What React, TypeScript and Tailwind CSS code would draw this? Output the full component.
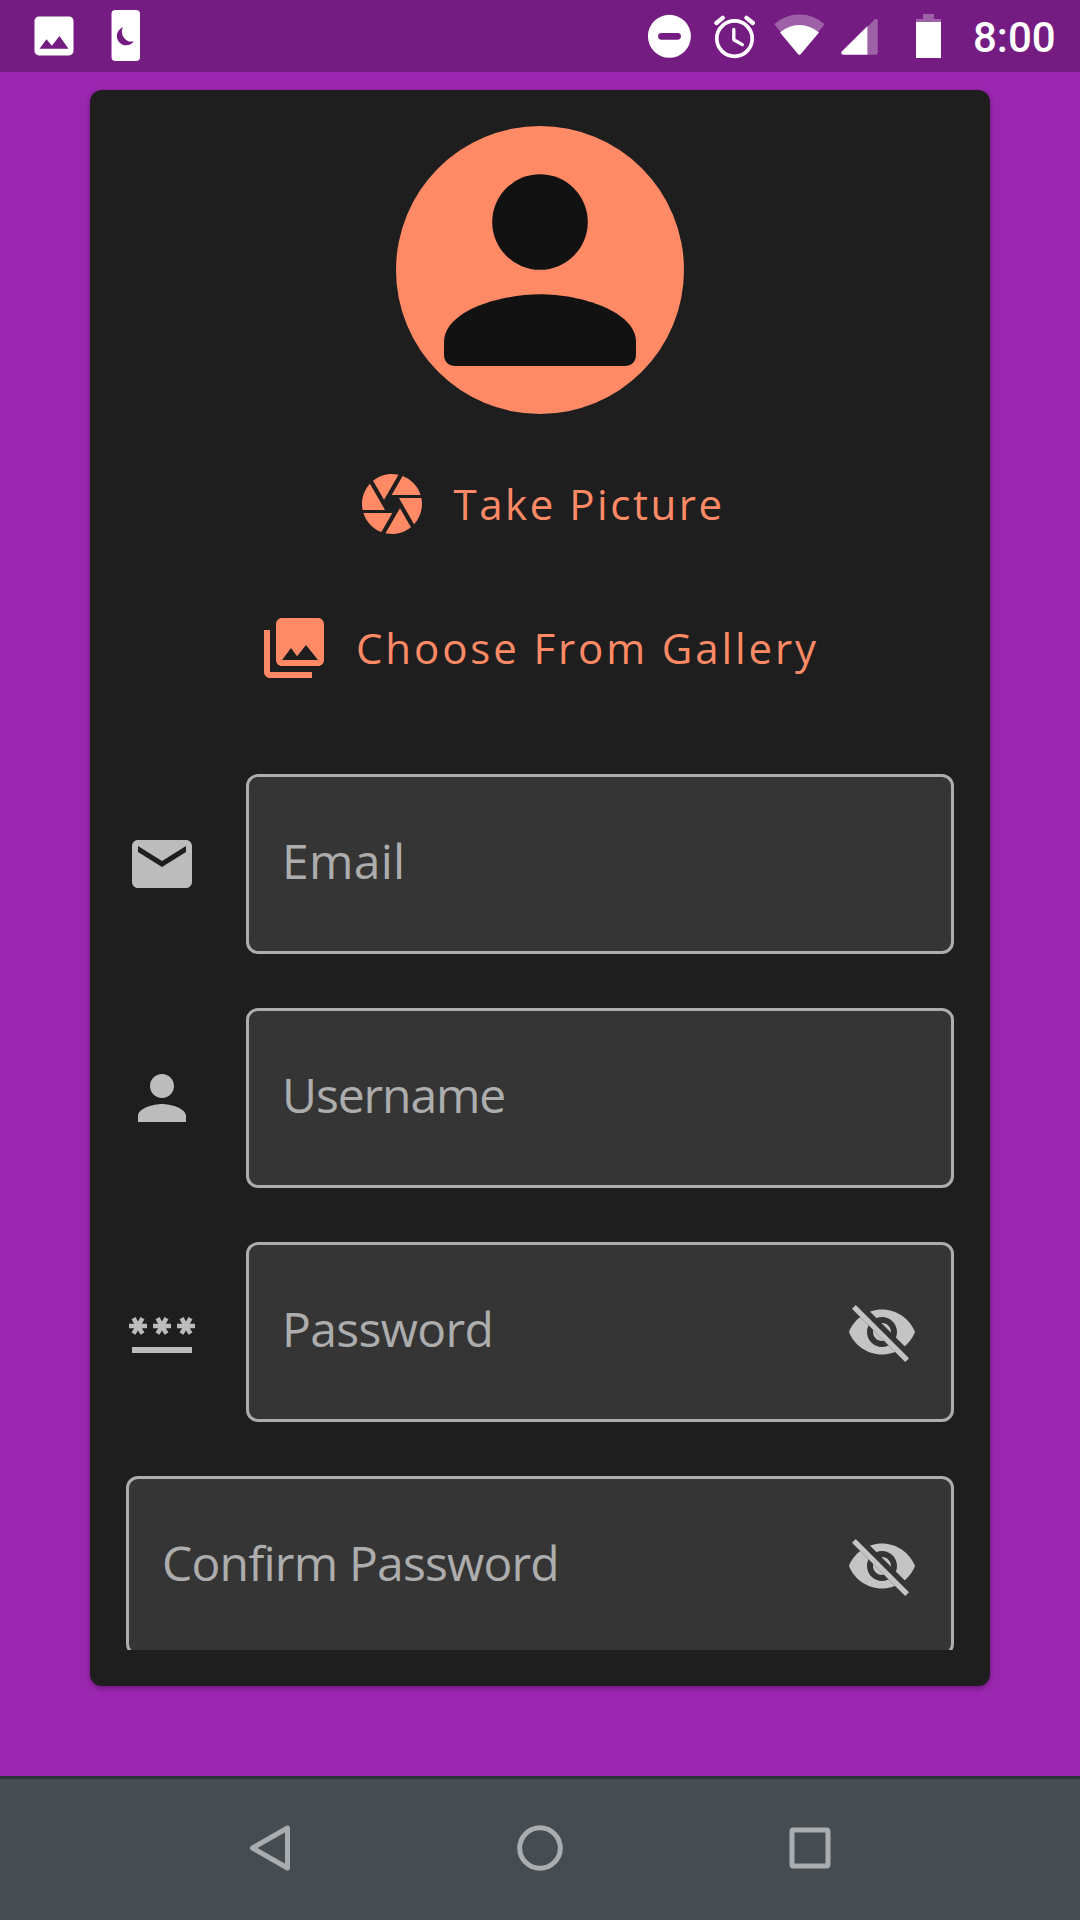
import React from "react";

function StatusBar() {
  return (
    <header className="flex h-[72px] items-center bg-[#751c82] text-white">
      <svg className="ml-[34px] h-[40px] w-[41px]" viewBox="34 16 41 40" fill="currentColor">
        <path
          fillRule="evenodd"
          d="M39 16.4h30a4.5 4.5 0 0 1 4.5 4.5v30a4.5 4.5 0 0 1-4.5 4.5H39a4.5 4.5 0 0 1-4.5-4.5v-30a4.5 4.5 0 0 1 4.5-4.5zM39.5 48.8h29L59.5 36l-7.7 9.7-5.3-6.5z"
        />
      </svg>
      <svg className="ml-[36px] h-[52px] w-[30px]" viewBox="111 10 30 52" fill="currentColor">
        <path
          fillRule="evenodd"
          d="M115.5 10H136a4 4 0 0 1 4 4v43a4 4 0 0 1-4 4h-20.500a4 4 0 0 1-4-4V14a4 4 0 0 1 4-4zM123 27.300a9.300 9.300 0 1 0 10.800 14a9.800 9.800 0 0 1-10.800-14z"
        />
      </svg>

      <svg className="ml-[506px] h-[44px] w-[44px]" viewBox="647 14 44 44" fill="currentColor">
        <path
          fillRule="evenodd"
          d="M669.400 14.800a21.500 21.500 0 1 0 0 43a21.500 21.500 0 0 0 0-43zM661.500 32.900h16a3.400 3.400 0 0 1 0 6.900h-16a3.400 3.400 0 0 1 0-6.900z"
        />
      </svg>
      <svg
        className="ml-[23px] h-[46px] w-[42px]"
        viewBox="714 13 42 46"
        fill="none"
        stroke="currentColor"
        strokeLinecap="round"
        strokeLinejoin="round"
      >
        <circle cx="734.500" cy="38.600" r="17.700" strokeWidth="3.700" />
        <path d="M733.800 29.500v10.200l8.600 4.900" strokeWidth="3.300" />
        <path d="M716.400 23l6.300-5.100M752.800 23l-6.300-5.100" strokeWidth="4.300" />
      </svg>
      <svg className="ml-[17px] h-[44px] w-[54px]" viewBox="773 14 54 44" fill="currentColor">
        <path
          fillOpacity=".3"
          d="M774.300 24.200Q784.800 14.500 799.400 14.500T824.600 24.200L801 53.800Q799.400 55.500 797.800 53.800z"
        />
        <path d="M780 32.500Q788.500 25 799.400 25T819 32.500L801 53.800Q799.400 55.500 797.800 53.800z" />
      </svg>
      <svg className="ml-[13px] h-[40px] w-[40px]" viewBox="840 16 40 40" fill="currentColor">
        <path fillOpacity=".3" d="M867.500 26.800l6.800-7q3.500-2.500 3.500 1.200v31.800q0 2-2 2h-8.300z" />
        <path d="M867.500 26v28.800h-24.300q-3.300-.8-1.200-3.500z" />
      </svg>
      <svg className="ml-[36px] h-[44px] w-[26px]" viewBox="916 14 26 44" fill="currentColor">
        <path fillOpacity=".3" d="M923 14h11v5h7v3h-25v-3h7z" />
        <path d="M916 22h25v36h-25z" />
      </svg>
      <span className="ml-[31px] whitespace-nowrap pt-[4px] font-['Roboto',sans-serif] text-[42px] font-medium leading-[68px]">
        8:00
      </span>
    </header>
  );
}

function Icon({ children, className }: { children: React.ReactNode; className?: string }) {
  return (
    <svg viewBox="0 0 24 24" fill="currentColor" className={`size-[72px] shrink-0 ${className ?? ""}`}>
      {children}
    </svg>
  );
}

function EyeOff() {
  return (
    <Icon className="text-[#c4c4c4]">
      <clipPath id="eye-clip">
        <path d="M2 4.270L19.730 22L22.270 19.460L4.540 1.730V1H23V23H1V4.270z" />
      </clipPath>
      <path
        clipPath="url(#eye-clip)"
        fillRule="evenodd"
        d="M12 4.500C7 4.500 2.730 7.610 1 12c1.730 4.390 6 7.500 11 7.500s9.270-3.110 11-7.500c-1.730-4.390-6-7.500-11-7.500zM12 17c-2.760 0-5-2.240-5-5s2.240-5 5-5 5 2.240 5 5-2.240 5-5 5zM12 9c-1.660 0-3 1.340-3 3s1.340 3 3 3 3-1.340 3-3-1.340-3-3-3z"
      />
      <path
        d="M3.270 4.270L19.740 20.740"
        fill="none"
        stroke="currentColor"
        strokeWidth="1.800"
        strokeLinecap="square"
      />
    </Icon>
  );
}

function Field({ label, tracking, secret }: { label: string; tracking: string; secret?: boolean }) {
  return (
    <div className="flex h-[180px] min-w-0 flex-1 items-center justify-between rounded-[12px] border-[3px] border-[#adadad] bg-[#353535] pr-[33px] pl-[33px]">
      <span className={`whitespace-nowrap pb-[6px] text-[48px] leading-[64px] text-[#adadad] ${tracking}`}>
        {label}
      </span>
      {secret && <EyeOff />}
    </div>
  );
}

function FieldRow({ icon, children }: { icon: React.ReactNode; children: React.ReactNode }) {
  return (
    <div className="flex shrink-0 items-center gap-[48px] text-[#bcbcbc]">
      {icon}
      {children}
    </div>
  );
}

export default function App() {
  return (
    <div className="flex h-[1920px] w-[1080px] flex-col overflow-hidden bg-[#9b26b0] font-['Open_Sans','Noto_Sans',sans-serif]">
      <StatusBar />

      <main className="flex flex-1 flex-col px-[90px] pt-[18px]">
        <section className="h-[1596px] rounded-[12px] bg-[#1e1e1e] p-[36px] shadow-[0_2px_5px_rgba(0,0,0,0.35)]">
          <div className="flex h-[1524px] flex-col overflow-hidden">
            <div className="mx-auto size-[288px] shrink-0 overflow-hidden rounded-full bg-[#ff8a65]">
              <svg viewBox="0 0 288 288" className="size-full" fill="#121212">
                <circle cx="144" cy="96" r="47.800" />
                <path d="M144 168.300C104 168.300 48 185 48 216V228Q48 240 60 240H228Q240 240 240 228V216C240 185 184 168.300 144 168.300z" />
              </svg>
            </div>

            <div className="mx-auto mt-[18px] flex h-[144px] w-[369px] shrink-0 items-center gap-[26px] text-[#ff8a65]">
              <Icon>
                <path d="M9.400 10.500l4.770-8.260C13.470 2.090 12.750 2 12 2c-2.400 0-4.600.85-6.320 2.250l3.660 6.350.06-.1zM21.540 9c-.92-2.920-3.150-5.260-6-6.340L11.880 9h9.660zm.26 1h-7.490l.29.500 4.760 8.250C21 16.970 22 14.610 22 12c0-.69-.07-1.350-.2-2zM8.540 12l-3.900-6.750C3.010 7.030 2 9.390 2 12c0 .69.070 1.350.2 2h7.490l-1.150-2zm-6.080 3c.92 2.920 3.150 5.260 6 6.340L12.120 15H2.460zm11.270 0l-3.900 6.760c.7.150 1.420.240 2.170.240 2.400 0 4.600-.85 6.320-2.250l-3.660-6.350-.93 1.600z" />
              </Icon>
              <span className="whitespace-nowrap pb-[1px] text-[42px] leading-[56px] tracking-[2.550px]">
                Take Picture
              </span>
            </div>
            <div className="mx-auto flex h-[144px] w-[564px] shrink-0 items-center gap-[26px] text-[#ff8a65]">
              <Icon>
                <path d="M22 16V4c0-1.100-.9-2-2-2H8c-1.100 0-2 .9-2 2v12c0 1.100.9 2 2 2h12c1.100 0 2-.9 2-2zm-11-4l2.030 2.710L16 11l4 5H8l3-4zM2 6v14c0 1.100.9 2 2 2h14v-2H4V6H2z" />
              </Icon>
              <span className="whitespace-nowrap pb-[1px] text-[42px] leading-[56px] tracking-[2.890px]">
                Choose From Gallery
              </span>
            </div>

            <form className="mt-[54px] flex shrink-0 flex-col gap-[54px]">
              <FieldRow
                icon={
                  <Icon>
                    <path d="M20 4H4c-1.100 0-1.990.9-1.990 2L2 18c0 1.100.9 2 2 2h16c1.100 0 2-.9 2-2V6c0-1.100-.9-2-2-2zm0 4l-8 5-8-5V6l8 5 8-5v2z" />
                  </Icon>
                }
              >
                <Field label="Email" tracking="tracking-[0.300px]" />
              </FieldRow>
              <FieldRow
                icon={
                  <Icon>
                    <path d="M12 12c2.210 0 4-1.790 4-4s-1.790-4-4-4-4 1.790-4 4 1.790 4 4 4zm0 2c-2.670 0-8 1.340-8 4v2h16v-2c0-2.660-5.330-4-8-4z" />
                  </Icon>
                }
              >
                <Field label="Username" tracking="tracking-[-1.100px]" />
              </FieldRow>
              <FieldRow
                icon={
                  <Icon>
                    <path d="M2 17h20v2H2v-2zm1.150-4.050L4 11.470l.85 1.480 1.300-.75-.85-1.480H7v-1.500H5.300l.85-1.470L4.850 7 4 8.470 3.150 7l-1.300.75.85 1.470H1v1.500h1.700l-.85 1.480 1.300.75zm6.700-.75l1.300.75.85-1.480.85 1.480 1.300-.75-.85-1.480H15v-1.500h-1.700l.85-1.470-1.300-.75L12 8.470 11.150 7l-1.300.75.85 1.470H9v1.500h1.700l-.85 1.480zM23 9.220h-1.700l.85-1.470-1.300-.75L20 8.470 19.150 7l-1.300.75.85 1.470H17v1.500h1.700l-.85 1.480 1.300.75.850-1.480.85 1.480 1.300-.75-.85-1.480H23v-1.500z" />
                  </Icon>
                }
              >
                <Field label="Password" tracking="tracking-[-0.650px]" secret />
              </FieldRow>
              <div className="flex">
                <Field label="Confirm Password" tracking="tracking-[-0.800px]" secret />
              </div>
            </form>
          </div>
        </section>
      </main>

      <nav className="flex h-[144px] shrink-0 items-center justify-between border-t-[3px] border-[#2d3336] bg-[#454d52] px-[240px] pb-[3px] text-[#a9adaf]">
        <svg className="size-[60px]" viewBox="0 0 60 60" fill="none" stroke="currentColor" strokeWidth="5">
          <path d="M12.500 30L47.500 10V50z" strokeLinejoin="round" />
        </svg>
        <svg className="size-[60px]" viewBox="0 0 60 60" fill="none" stroke="currentColor" strokeWidth="5">
          <circle cx="30" cy="30" r="20.300" />
        </svg>
        <svg className="size-[60px]" viewBox="0 0 60 60" fill="none" stroke="currentColor" strokeWidth="5">
          <rect x="12" y="12" width="36" height="36" rx="1.500" />
        </svg>
      </nav>
    </div>
  );
}
